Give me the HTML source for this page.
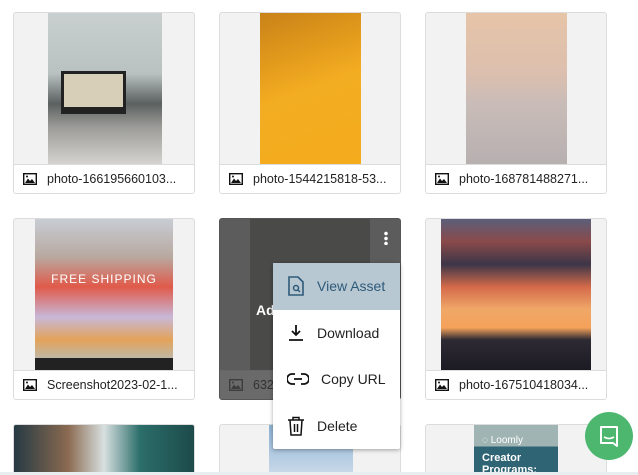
<!DOCTYPE html>
<html style="width:638px;height:475px;overflow:hidden"><head><style>
*{box-sizing:border-box;margin:0;padding:0}
body{width:638px;height:475px;overflow:hidden;background:#fff;font-family:"Liberation Sans",sans-serif;position:relative}
.card{position:absolute;width:182px;height:182px;border:1px solid #dcdcdc;border-radius:3px;background:#f2f2f2;overflow:hidden}
.img{position:absolute;top:0;height:151px}
.cap{position:absolute;left:0;right:0;top:151px;height:30px;background:#fff;border-top:1px solid #dcdcdc;font-size:12.5px;color:#222;line-height:29px;padding-left:33px;white-space:nowrap}
.cap svg{position:absolute;left:9px;top:8px}
.menu{position:absolute;left:273px;top:263px;width:127px;height:186px;background:#fff;box-shadow:0 1px 4px rgba(0,0,0,.35);border-radius:2px}
.mi{height:46.5px;display:flex;align-items:center;font-size:14px;color:#222}
.mi svg{margin-left:14px;margin-right:12px}
.r3{height:48px;border-bottom:none;border-radius:3px 3px 0 0}
.r3 .img{height:48px}
</style></head><body>
<svg width="0" height="0" style="position:absolute"><defs><symbol id="pic" viewBox="0 0 14 12"><rect x="0.7" y="0.7" width="12.6" height="10.6" fill="none" stroke="#111" stroke-width="1.4"/><path d="M2 10 L5 5.5 L7 8 L9 6 L12 10Z" fill="#111"/><circle cx="4" cy="3.5" r="1" fill="#111"/></symbol></defs></svg>

<div class="card" style="left:13px;top:12px"><div class="img" style="left:34px;width:114px;background:linear-gradient(#c9cfcf 0%,#b9c1c1 40%,#5b6060 60%,#9a9a96 75%,#d5d3cf 100%)"><div style="position:absolute;left:13px;top:58px;width:65px;height:43px;background:#222"><div style="margin:3px;height:33px;background:#d8cfb8"></div></div></div><div class="cap"><svg width="14" height="12"><use href="#pic"/></svg>photo-166195660103...</div></div>
<div class="card" style="left:219px;top:12px"><div class="img" style="left:40px;width:101px;background:linear-gradient(160deg,#c98218 0%,#e39b1c 30%,#f3ad22 50%,#f4ab1c 100%)"></div><div class="cap"><svg width="14" height="12"><use href="#pic"/></svg>photo-1544215818-53...</div></div>
<div class="card" style="left:425px;top:12px"><div class="img" style="left:40px;width:101px;background:linear-gradient(#e6c4a8 0%,#dcbfae 40%,#c9bcb8 60%,#b7b0b0 100%)"></div><div class="cap"><svg width="14" height="12"><use href="#pic"/></svg>photo-168781488271...</div></div>

<div class="card" style="left:13px;top:218px"><div class="img" style="left:21px;width:138px;background:linear-gradient(#c8ccd4 0%,#b8a9a0 25%,#e05a4a 45%,#c8b8d8 65%,#e3a35a 80%,#a9c4d6 100%)"><div style="position:absolute;top:53px;width:100%;text-align:center;color:#fff;font-size:12px;letter-spacing:1px">FREE SHIPPING</div><div style="position:absolute;bottom:0;width:100%;height:12px;background:#222"></div></div><div class="cap"><svg width="14" height="12"><use href="#pic"/></svg>Screenshot2023-02-1...</div></div>
<div class="card" style="left:219px;top:218px;background:#5c5c5c;border-color:#555"><div class="img" style="left:30px;width:120px;background:#4a4a48"></div><div style="position:absolute;left:36px;top:83px;color:#fff;font-weight:bold;font-size:14px">Ad</div><div style="position:absolute;left:164px;top:12px;width:4px;height:14px;background:radial-gradient(circle,#fff 1.6px,transparent 2px) 0 0/4px 5px"></div><div class="cap" style="background:#6a6a6a;border-color:#666;color:#333"><svg width="14" height="12" style="opacity:.5"><use href="#pic"/></svg>632</div></div>
<div class="card" style="left:425px;top:218px"><div class="img" style="left:15px;width:150px;background:linear-gradient(#5b5f7a 0%,#8a4a4a 15%,#3c3648 30%,#d46a4a 45%,#f0a868 60%,#f5a15a 72%,#2d2a33 80%,#1c1a22 100%)"></div><div class="cap"><svg width="14" height="12"><use href="#pic"/></svg>photo-167510418034...</div></div>

<div class="card r3" style="left:13px;top:424px;background:linear-gradient(90deg,#263a44,#8a6a50 30%,#d8e0e0 50%,#2b6e6a 70%,#1d4a4a)"></div>
<div class="card r3" style="left:219px;top:424px"><div class="img" style="left:49px;width:84px;background:linear-gradient(#8fb4d6,#c8d8e8)"></div></div>
<div class="card r3" style="left:425px;top:424px"><div class="img" style="left:48px;width:84px;background:linear-gradient(#a0b4b4 0%,#a0b4b4 45%,#2f6474 45%)"><div style="position:absolute;left:8px;top:10px;color:#fff;font-size:10px">◌ Loomly</div><div style="position:absolute;left:8px;top:27px;color:#fff;font-size:11px;font-weight:bold">Creator<br>Programs:</div></div></div>

<div class="menu">
<div class="mi" style="background:#b8c8d2;color:#2e5a7a"><svg width="18" height="20" viewBox="0 0 18 20"><path d="M2 1h9l5 5v13H2z" fill="none" stroke="#2e5a7a" stroke-width="1.6"/><circle cx="9" cy="12" r="2.5" fill="none" stroke="#2e5a7a" stroke-width="1.5"/><path d="M11 14l2 2" stroke="#2e5a7a" stroke-width="1.5"/></svg>View Asset</div>
<div class="mi"><svg width="18" height="18" viewBox="0 0 18 18"><path d="M9 1v10M5 7l4 4 4-4M2 16h14" fill="none" stroke="#111" stroke-width="1.8"/></svg>Download</div>
<div class="mi"><svg width="22" height="14" viewBox="0 0 22 14"><path d="M8 2H5a5 5 0 0 0 0 10h3M14 2h3a5 5 0 0 1 0 10h-3M7 7h8" fill="none" stroke="#111" stroke-width="1.8"/></svg>Copy URL</div>
<div class="mi"><svg width="18" height="20" viewBox="0 0 18 20"><path d="M1 4h16M6 4V1.5h6V4M3 4l1 15h10l1-15M7.5 8v8M10.5 8v8" fill="none" stroke="#111" stroke-width="1.5"/></svg>Delete</div>
</div>

<div style="position:absolute;left:585px;top:412px;width:48px;height:48px;border-radius:50%;background:#4db66f"><svg width="48" height="48" viewBox="0 0 48 48"><path d="M16 15h16v19l-4-3H16z" fill="none" stroke="#fff" stroke-width="2" stroke-linejoin="round"/><path d="M19 25q5 3 10 0" fill="none" stroke="#fff" stroke-width="1.8"/></svg></div>
<div style="position:absolute;left:0;top:472px;width:638px;height:3px;background:#e8eef0"></div>
</body></html>
